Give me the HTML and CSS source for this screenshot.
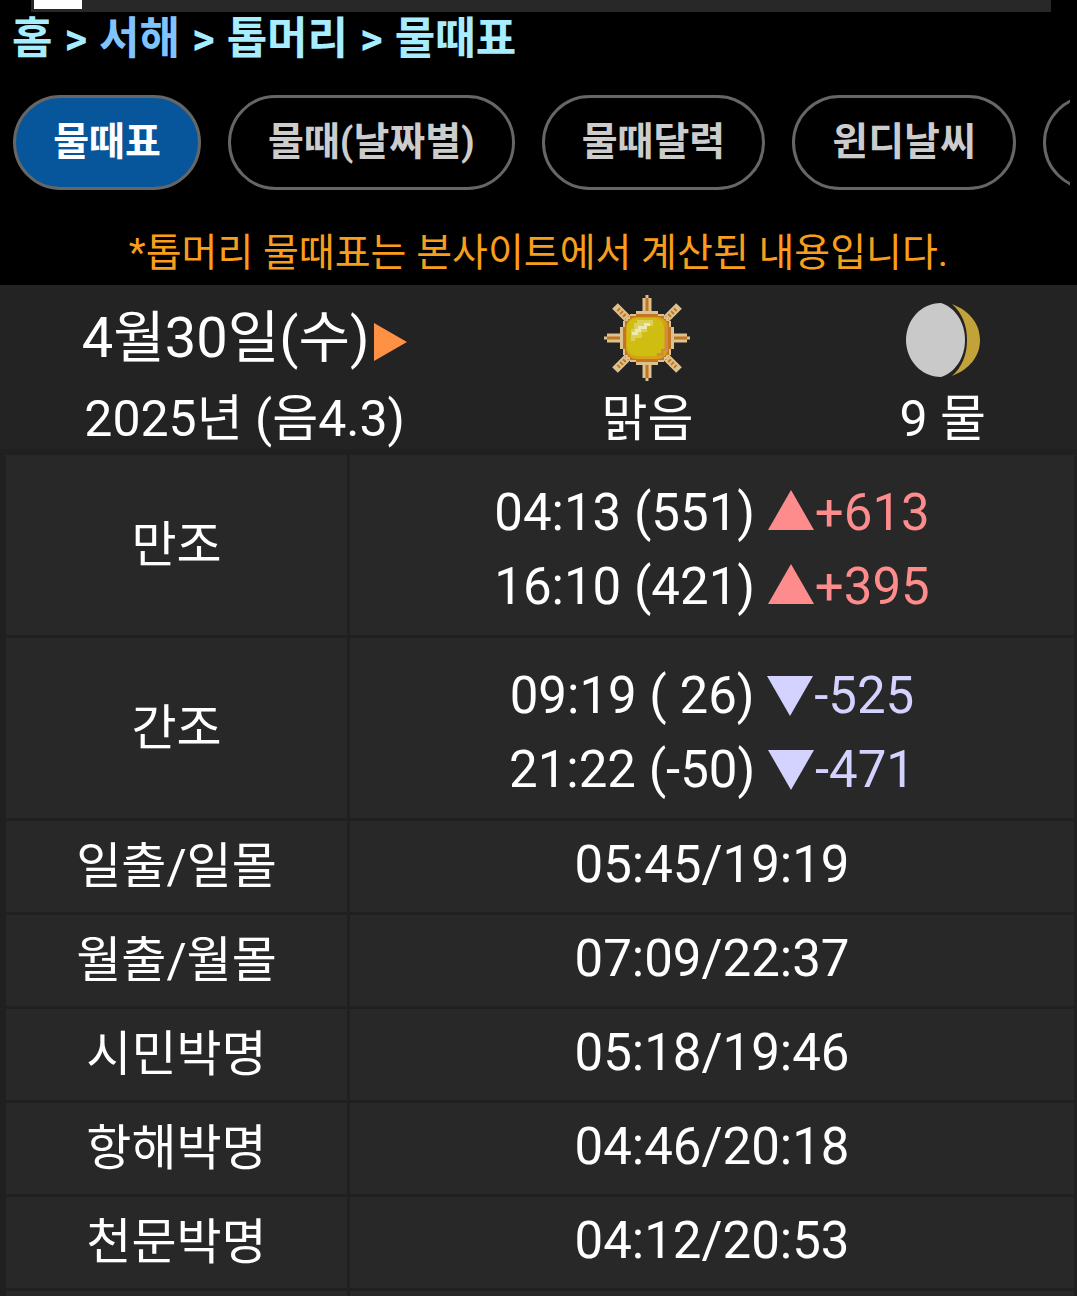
FILE: index.html
```html
<!DOCTYPE html>
<html lang="ko">
<head>
    <meta charset="UTF-8">
    <meta name="viewport" content="width=device-width, initial-scale=1.0">
    <title>톱머리 물때표</title>
    <link rel="stylesheet" href="styles.css">
</head>
<body>
    <div class="banner"><div class="banner-box"></div></div>

    <nav class="breadcrumb">
        <a href="#">홈</a> <span>&gt;</span> <a href="#" class="region">서해</a> <span>&gt;</span> <a href="#">톱머리</a> <span>&gt;</span> <a href="#">물때표</a>
    </nav>

    <nav class="tabs">
        <a href="#" class="tab active">물때표</a>
        <a href="#" class="tab">물때(날짜별)</a>
        <a href="#" class="tab">물때달력</a>
        <a href="#" class="tab">윈디날씨</a>
        <a href="#" class="tab" aria-label="더보기"></a>
    </nav>

    <p class="notice">*톱머리 물때표는 본사이트에서 계산된 내용입니다.</p>

    <section class="day">
        <div class="day-date">
            <div class="date">4월30일(수)<svg class="next" viewBox="0 0 33 38"><path d="M0 0L33 19L0 38Z"/></svg></div>
            <div>2025년 (음4.3)</div>
        </div>
        <div class="day-weather">
            <svg class="sun" viewBox="0 0 88 88">
                <!-- rays -->
                <path stroke="#dcc290" stroke-width="9" d="M44 4V84M4 44H84"/>
                <path stroke="#dcc290" stroke-width="3" d="M44 1V87M1 44H87"/>
                <path stroke="#c4751f" stroke-width="3" d="M44 4V84M4 44H84"/>
                <path stroke="#dcc290" stroke-width="8" d="M12 12L76 76M76 12L12 76"/>
                <path stroke="#c4751f" stroke-width="4" stroke-dasharray="2 2" d="M15 15L73 73M73 15L15 73"/>
                <!-- body -->
                <path fill="#dcc290" d="M33 17H55V20H61V23H65V27H68V33H71V55H68V61H65V65H61V68H55V71H33V68H27V65H23V61H20V55H17V33H20V27H23V23H27V20H33Z"/>
                <path fill="#c4751f" d="M33 20H55V22H61V25H63V27H66V33H68V55H66V61H63V63H61V66H55V68H33V66H27V63H25V61H22V55H20V33H22V27H25V25H27V22H33Z"/>
                <rect fill="#d5a314" x="23" y="23" width="42" height="42" rx="11"/>
                <rect fill="#cfbd12" x="24" y="24" width="37" height="38" rx="10"/>
                <path fill="#cf8b4a" d="M62 31H65V57H61V62H54V59H58V55H62Z"/>
                <path fill="#ddd05a" d="M34 26H50V32H44V38H39V44H32V47H28V35H31V29H34Z"/>
                <path fill="#eee8b5" d="M41 29H47V32H44V35H38V38H35V41H29V38H32V35H35V32H41Z"/>
            </svg>
            <div>맑음</div>
        </div>
        <div class="day-moon">
            <svg class="moon" viewBox="0 0 74 74">
                <path fill="#c9c9c9" d="M35 0C15 0 0 17 0 37S15 74 35 74C50 69 59 54 59 37S50 5 35 0Z"/>
                <path fill="#c3a23a" d="M46 1C64 8 74 21 74 37S64 66 46 73C56 64 61 52 61 37S56 10 46 1Z"/>
            </svg>
            <div>9 물</div>
        </div>
    </section>

    <table class="tide">
        <tr class="tall">
            <th scope="row">만조</th>
            <td>
                <div>04:13 (551) <span class="up"><svg viewBox="0 0 46 40"><path d="M23 0L46 40H0Z"/></svg>+613</span></div>
                <div>16:10 (421) <span class="up"><svg viewBox="0 0 46 40"><path d="M23 0L46 40H0Z"/></svg>+395</span></div>
            </td>
        </tr>
        <tr class="tall">
            <th scope="row">간조</th>
            <td>
                <div>09:19 ( 26) <span class="down"><svg viewBox="0 0 46 40"><path d="M0 0H46L23 40Z"/></svg>-525</span></div>
                <div>21:22 (-50) <span class="down"><svg viewBox="0 0 46 40"><path d="M0 0H46L23 40Z"/></svg>-471</span></div>
            </td>
        </tr>
        <tr><th scope="row">일출/일몰</th><td>05:45/19:19</td></tr>
        <tr><th scope="row">월출/월몰</th><td>07:09/22:37</td></tr>
        <tr><th scope="row">시민박명</th><td>05:18/19:46</td></tr>
        <tr><th scope="row">항해박명</th><td>04:46/20:18</td></tr>
        <tr><th scope="row">천문박명</th><td>04:12/20:53</td></tr>
        <tr><th></th><td></td></tr>
    </table>
</body>
</html>
```
FILE: styles.css
```css
* {
    box-sizing: border-box;
}

body {
    margin: 0;
    height: 100vh;
    overflow: hidden;
    background-color: #000;
    color: #fff;
    font-family: Roboto, "Noto Sans CJK KR", sans-serif;
    font-size: 51px;
}

a {
    color: inherit;
    text-decoration: none;
}

.banner {
    height: 12px;
    margin: 0 26px 0 31px;
    padding-left: 3px;
    background-color: #282828;
}

.banner-box {
    width: 48px;
    height: 9px;
    background-color: #fff;
}

.breadcrumb {
    padding: 0 12px;
    color: #a5edff;
    font-size: 44px;
    font-weight: bold;
    line-height: 54px;
}

.breadcrumb span {
    margin: 0 1px;
}

.breadcrumb .region {
    color: #80c4ff;
}

.tabs {
    display: flex;
    gap: 27px;
    margin: 29px 7px 0 13px;
    overflow: hidden;
}

.tab {
    flex: none;
    min-width: 188px;
    height: 95px;
    padding: 0 37px;
    border: 3px solid #666;
    border-radius: 48px;
    color: #ccc;
    font-size: 39px;
    font-weight: bold;
    line-height: 89px;
    text-align: center;
}

.tab.active {
    background-color: #07569b;
    color: #fff;
}

.notice {
    margin: 0;
    padding: 36px 0 5px;
    color: #f99d1c;
    font-size: 39px;
    line-height: 54px;
    text-align: center;
}

.day {
    display: grid;
    grid-template-columns: 45fr 30fr 25fr;
    height: 167px;
    padding: 9px 0 0 3px;
    border-bottom: 3px solid #202020;
    background-color: #232323;
    font-size: 50px;
    line-height: 74px;
    text-align: center;
}

.date {
    font-size: 56px;
    line-height: 88px;
}

.day svg {
    display: block;
    margin: 0 auto;
}

.day .next {
    display: inline-block;
    width: 33px;
    height: 38px;
    margin-left: 5px;
    vertical-align: -4px;
    fill: #ff9145;
}

.sun {
    width: 88px;
    height: 88px;
    fill: none;
}

.day .moon {
    width: 74px;
    height: 74px;
    margin: 9px auto 5px;
}

.tide {
    width: 100%;
    border-spacing: 3px;
    border-left: 3px solid #202020;
    background-color: #202020;
    table-layout: fixed;
}

.tide th,
.tide td {
    height: 91px;
    padding: 0 0 4px;
    background-color: #282828;
}

.tide th {
    width: 341px;
    padding-bottom: 10px;
    font-size: 49px;
    font-weight: normal;
}

.tide .tall th,
.tide .tall td {
    height: 180px;
}

.tide .tall td {
    padding: 10px 0 0;
    line-height: 74px;
}

.tide td {
    text-align: center;
}

.tide svg {
    width: 46px;
    height: 40px;
    margin-right: 1px;
    fill: currentColor;
}

.up {
    color: #ff8c8c;
}

.down {
    color: #d4d2ff;
}

.tide .down svg {
    vertical-align: -3px;
}
```
